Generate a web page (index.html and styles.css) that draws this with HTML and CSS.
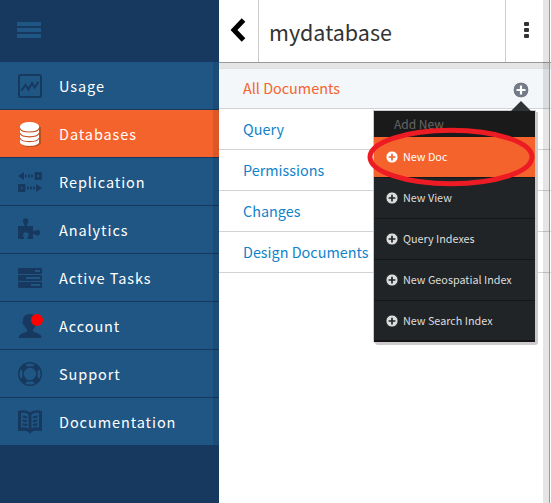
FILE: index.html
```html
<!DOCTYPE html>
<html lang="en">
<head>
<meta charset="utf-8">
<title>mydatabase</title>
<link rel="stylesheet" href="styles.css">
</head>
<body>
<svg width="0" height="0" class="defs">
  <symbol id="plus" viewBox="0 0 16 16"><circle cx="8" cy="8" r="8" fill="currentColor"/><path class="cross" d="M8 3.500v9M3.500 8h9" stroke-width="2.200"/></symbol>
</svg>
<div class="app">
  <nav class="sidebar">
    <div class="burger"><i></i><i></i><i></i></div>
    <ul class="nav">
      <li><svg class="icon" viewBox="0 0 24 24"><rect x="1" y="1" width="22" height="22" rx="1.5" fill="none" stroke="currentColor" stroke-width="2"/><path d="M3.500 16.500 7.500 11l3 4.500 3.500-6.500 2.500 4.500 4-5.800" fill="none" stroke="currentColor" stroke-width="2"/></svg><span>Usage</span></li>
      <li class="active"><svg class="icon db" viewBox="0 0 24 24"><path d="M3.500 5v17c2 4.500 17.500 4 19.500-1V5z" fill="#b9501f"/><path d="M2 4v16.500c1 4.500 18 4.500 19 0V4z" fill="#fff"/><ellipse cx="11.500" cy="4.300" rx="9.500" ry="4.300" fill="#fff"/><path d="M2 6.500c2 4.700 17 4.700 19 0M2 11.300c2 4.700 17 4.700 19 0M2 16.100c2 4.700 17 4.700 19 0" fill="none" stroke="#c6501f" stroke-width="1.100"/></svg><span>Databases</span></li>
      <li><svg class="icon" viewBox="0 0 24 24"><path d="M0 6l6-4v8zM24 18l-6-4v8z" fill="currentColor"/><path d="M18 3.500h4.500v5H18zM1.500 15.500H6v5H1.500z" fill="none" stroke="currentColor" stroke-width="2.800"/><path d="M8 4.500v3M11 4.500v3M14 4.500v3M10 16.500v3M13 16.500v3M16 16.500v3" stroke="currentColor" stroke-width="1.700"/></svg><span>Replication</span></li>
      <li><svg class="icon" viewBox="0 0 24 24"><path d="M0 8h6.500C7 6.500 5 5.500 5 3a2.700 2.700 0 0 1 5.400 0C10.400 5.500 8.500 6.500 9 8h6v5c1.500.8 2.500-1 4.500-1a2.700 2.700 0 0 1 0 5.400c-2 0-3-1.700-4.500-1V21H9.500c-.8-1.500 1-2 1-4a2.700 2.700 0 0 0-5.400 0c0 2 1.500 2.500 1 4H0z" fill="currentColor"/></svg><span>Analytics</span></li>
      <li><svg class="icon" viewBox="0 0 24 24"><g fill="currentColor"><rect y="2" width="24" height="6" rx="1"/><rect y="9" width="24" height="6" rx="1"/><rect y="16" width="24" height="6" rx="1"/></g><path d="M17 5h5M8 12h14M13 19h9" stroke="#205684" stroke-width="1.800"/></svg><span>Active Tasks</span></li>
      <li><svg class="icon" viewBox="0 0 24 24"><path d="M12 0c5 0 7 3 6.500 7.500 1 1 .4 3-.8 3.500-.5 2.500-1.700 3.500-2.700 4.800v1.700c3 1.500 8.300 1.500 8.500 6.500H.8c.2-5 5.500-5 8.500-6.500v-1.700C8 14.500 6.800 13.500 6.300 11 4.500 10.500 4 8.500 5 7.500 4.500 3 7 0 12 0z" fill="currentColor"/><circle cx="19" cy="6" r="6" fill="#f00"/></svg><span>Account</span></li>
      <li><svg class="icon" viewBox="0 0 24 24"><g fill="none" stroke="currentColor"><circle cx="12" cy="12" r="11.300" stroke-width="1.500"/><circle cx="12" cy="12" r="7" stroke-width="1.600"/><path d="M4.400 4.400l3.200 3.200M16.400 16.400l3.200 3.200M4.400 19.600l3.200-3.200M16.400 7.600l3.200-3.200" stroke-width="6.500"/></g></svg><span>Support</span></li>
      <li><svg class="icon" viewBox="0 0 24 24"><path d="M0 1C4-.3 9 0 12 2.500 15 0 20-.3 24 1v20c-4-.3-8.500-.5-10.500 1L12 24l-1.500-2C8.500 20.500 4 20.700 0 21z" fill="currentColor"/><path d="M3 3c3-.5 5.500 0 7.500 1.500v14C8.500 17.300 5.500 17 3 17.500zM21 3c-3-.5-5.500 0-7.500 1.500v14c2-1.200 5-1.500 7.500-1z" fill="#205684"/><path d="M4.500 6.500c1.800 0 3 .5 4.500 1.300M4.500 10.500c1.800 0 3 .5 4.500 1.300M4.500 14.300c1.800 0 3 .3 4.500 1M19.500 6.500c-1.800 0-3 .5-4.500 1.300M19.500 10.500c-1.800 0-3 .5-4.500 1.300M19.500 14.300c-1.800 0-3 .3-4.500 1" fill="none" stroke="currentColor" stroke-width="2.200"/></svg><span>Documentation</span></li>
    </ul>
  </nav>
  <main class="panel">
    <header class="bar">
      <div class="back"><svg viewBox="0 0 16 24" width="16" height="24"><path d="M13.500 2 4 12l9.500 10" fill="none" stroke="#000" stroke-width="5"/></svg></div>
      <h1>mydatabase</h1>
      <div class="more"><i></i><i></i><i></i></div>
    </header>
    <ul class="links">
      <li class="current"><span>All Documents</span><svg class="add"><use href="#plus"/></svg></li>
      <li>Query</li>
      <li>Permissions</li>
      <li>Changes</li>
      <li>Design Documents</li>
    </ul>
  </main>
  <div class="edge"></div>
  <div class="menu">
    <div class="menu-title">Add New</div>
    <div class="item hot"><svg><use href="#plus"/></svg>New Doc</div>
    <div class="item"><svg><use href="#plus"/></svg>New View</div>
    <div class="item"><svg><use href="#plus"/></svg>Query Indexes</div>
    <div class="item"><svg><use href="#plus"/></svg>New Geospatial Index</div>
    <div class="item"><svg><use href="#plus"/></svg>New Search Index</div>
  </div>
  <svg class="ring" viewBox="0 0 170 62"><ellipse cx="85" cy="31" rx="81" ry="26.800" fill="none" stroke="#ed1c24" stroke-width="5"/></svg>
</div>
</body>
</html>
```
FILE: styles.css
```css
* { box-sizing: border-box; }
body { margin: 0; background: #fff; font-family: "Noto Sans CJK SC", "Noto Sans", sans-serif; overflow: hidden; }
ul { list-style: none; margin: 0; padding: 0; }
.defs { position: absolute; }
.app { position: relative; display: flex; width: 551px; height: 503px; }

.sidebar { position: relative; width: 219px; background: #17395f; }
.sidebar::after { content: ""; position: absolute; top: 62px; right: 0; width: 6px; height: 383px; background: rgba(0, 0, 0, .1); }
.burger { height: 62px; padding: 22px 0 0 17px; display: flex; flex-direction: column; gap: 2px; }
.burger i { width: 24px; height: 4px; background: #205684; }
.nav li { height: 48px; display: flex; align-items: center; padding-left: 18px; background: #205684; border-bottom: 1px solid #17395f; color: #fff; font-size: 14.500px; letter-spacing: .92px; line-height: 24px; }
.nav li:last-child { height: 47px; border-bottom: 0; }
.nav .active { background: #f5632d; }
.icon { width: 24px; height: 24px; margin: 1px 17px 0 0; color: #17395f; overflow: visible; }

.panel { width: 332px; }
.bar { height: 63px; display: flex; border-bottom: 1px solid #999; }
.back { width: 40px; border-right: 1px solid #ccc; padding: 18px 0 0 11px; }
h1 { flex: 1; margin: 0; padding: 15px 0 0 10px; font-size: 21.500px; font-weight: 400; line-height: 34px; color: #333; }
.more { width: 46px; border-left: 1px solid #ccc; padding: 22px 0 0 18px; display: flex; flex-direction: column; gap: 2px; }
.more i { width: 5px; height: 4px; background: #333; border-radius: 1px; }
.links { border-top: 5px solid #e5e5e5; }
.links li { height: 41px; padding: 0 22px 1px 24px; display: flex; align-items: center; justify-content: space-between; border-bottom: 1px solid #d0d3d6; color: #0f83c9; font-size: 14.400px; line-height: 24px; }
.links .current { background: #f3f7fa; color: #f5632d; border-top: 1px solid #dde0e2; padding-bottom: 0; }
.current span { margin-top: -1px; }
.add { width: 16px; height: 16px; color: #737a88; stroke: #fff; margin: 2px 0 0; }

.edge { position: absolute; top: 0; bottom: 0; right: 1px; width: 7px; background: rgba(0, 0, 0, .1); border-right: 1px solid #999; }

.menu { position: absolute; left: 374px; top: 111px; width: 161px; background: #202426; border-radius: 0 0 2px 2px; box-shadow: 0 0 0 1px #cbcbcd, 2px 2px 0 1px #cbcbcd; }
.menu::before { content: ""; position: absolute; right: 4px; top: -10px; border: solid transparent; border-width: 0 10px 10px; border-bottom-color: #2f3335; }
.menu-title { height: 26px; padding: 1px 0 0 20px; background: #1a1a1a; color: #666; font-size: 12px; line-height: 24px; }
.item { height: 41px; display: flex; align-items: center; padding: 0 0 2px 12px; border-bottom: 1px solid #151819; color: #ddd; font-size: 10.800px; line-height: 20px; }
.item:last-child { border-bottom: 2px solid #171314; padding-bottom: 1px; }
.item svg { width: 12px; height: 12px; margin: 1px 5px 0 0; color: #ddd; stroke: #202426; }
.hot { background: #f5632d; color: #fff; }
.hot svg { color: #fff; stroke: #f5632d; }

.ring { position: absolute; left: 366px; top: 126px; width: 170px; height: 62px; }
```
